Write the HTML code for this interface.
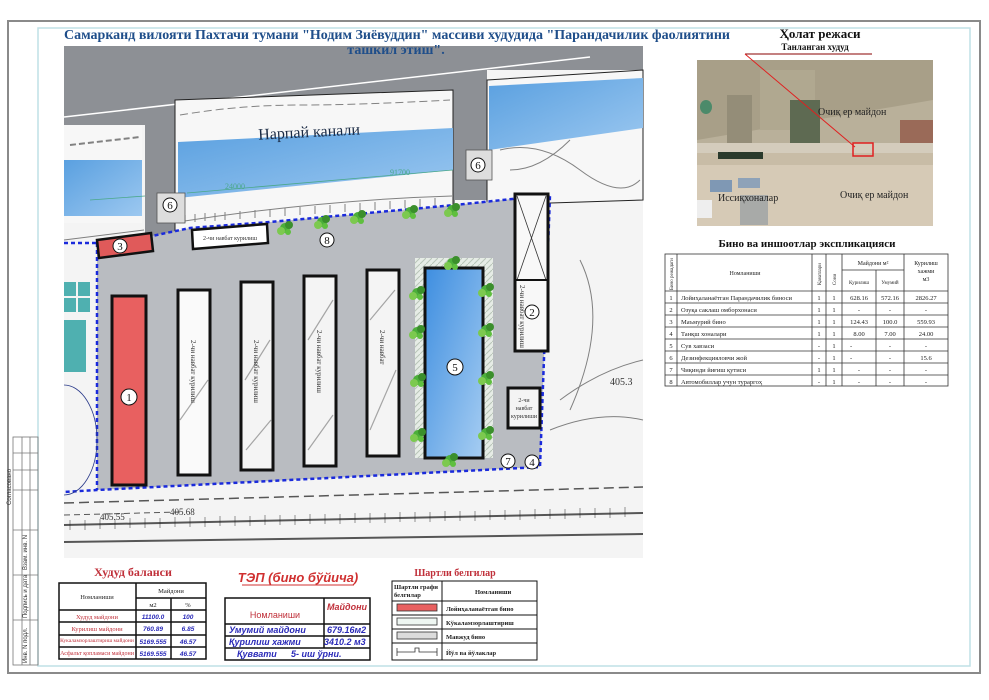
<!DOCTYPE html>
<html><head><meta charset="utf-8"><style>
html,body{margin:0;padding:0;background:#fff;width:989px;height:700px;overflow:hidden}
svg{display:block}
text{font-family:"Liberation Serif",serif}
.s{font-family:"Liberation Sans",sans-serif}
</style></head><body>
<svg width="989" height="700" viewBox="0 0 989 700" xmlns="http://www.w3.org/2000/svg">
<defs>
<linearGradient id="bl" x1="0" y1="0" x2="1" y2="1"><stop offset="0" stop-color="#5aa0e0"/><stop offset="1" stop-color="#9cc8f0"/></linearGradient>
<linearGradient id="pool" x1="0" y1="0" x2="1" y2="1"><stop offset="0" stop-color="#3e8ee0"/><stop offset="1" stop-color="#a6cdf2"/></linearGradient>
<pattern id="hat" width="6" height="6" patternUnits="userSpaceOnUse"><rect width="6" height="6" fill="#e6ece6"/><path d="M0 6L6 0" stroke="#b8c4b8" stroke-width="1"/></pattern>
<g id="tree"><circle cx="0" cy="0" r="5" fill="#4caf3a"/><circle cx="-4" cy="3" r="4" fill="#7cc94f"/><circle cx="4" cy="-3" r="4" fill="#3b8f2c"/><circle cx="3" cy="4" r="3" fill="#5fbf3f"/></g>
</defs>
<rect x="8" y="21" width="972" height="652" fill="#fff" stroke="#8a8a8a" stroke-width="2"/>
<rect x="38" y="28" width="932" height="638" fill="#fff" stroke="#bfe0e6" stroke-width="1.5"/>
<g stroke="#777" stroke-width="0.8" fill="none">
<rect x="13" y="437" width="25" height="228"/>
<line x1="22" y1="437" x2="22" y2="665"/><line x1="30" y1="437" x2="30" y2="665"/>
<line x1="13" y1="453" x2="38" y2="453"/><line x1="13" y1="470" x2="38" y2="470"/><line x1="13" y1="490" x2="38" y2="490"/>
<line x1="13" y1="530" x2="38" y2="530"/><line x1="13" y1="575" x2="38" y2="575"/><line x1="13" y1="620" x2="38" y2="620"/>
</g>
<text x="0" y="0" font-size="6" fill="#333" class="s" transform="translate(11 505) rotate(-90)">Согласовано</text>
<text x="0" y="0" font-size="6" fill="#333" class="s" transform="translate(27 570) rotate(-90)">Взам. инв. N</text>
<text x="0" y="0" font-size="6" fill="#333" class="s" transform="translate(27 618) rotate(-90)">Подпись и дата</text>
<text x="0" y="0" font-size="6" fill="#333" class="s" transform="translate(27 663) rotate(-90)">Инв. N подл.</text>

<g>
<rect x="64" y="46" width="579" height="512" fill="#f4f4f4"/>
<polygon points="64,46 643,46 643,70 485,70 485,90 455,90 455,235 175,235 175,90 145,90 145,125 64,125" fill="#8d9095"/>
<rect x="145" y="90" width="30" height="150" fill="#8d9095"/>
<rect x="455" y="70" width="32" height="130" fill="#8d9095"/>
<line x1="64" y1="117" x2="590" y2="57" stroke="#fff" stroke-width="1.5"/>
<rect x="64" y="125" width="78" height="98" fill="#f7f7f7"/>
<rect x="64" y="160" width="78" height="56" fill="url(#bl)"/>
<polygon points="175,100 453,90 453,230 175,238" fill="#f7f7f7" stroke="#222" stroke-width="1"/>
<polygon points="178,142 453,128 453,170 178,198" fill="url(#bl)"/>
<text x="258" y="137" font-size="16" fill="#1a2a44" transform="rotate(-3 310 130)">Нарпай канали</text>
<polygon points="487,80 643,70 643,200 487,205" fill="#f7f7f7" stroke="#222" stroke-width="1"/>
<polygon points="489,86 643,78 643,128 489,150" fill="url(#bl)"/>
<g stroke="#333" stroke-width="1" opacity="0.6" fill="none">
<path d="M185 215 l0 8 M195 214 l0 8 M205 213 l0 8 M215 213 l0 8 M225 212 l0 8 M240 211 l0 8 M255 210 l0 8 M270 209 l0 8 M285 208 l0 8 M300 207 l0 8 M315 206 l0 8 M330 205 l0 8 M345 204 l0 8 M360 203 l0 8 M375 202 l0 8 M390 201 l0 8 M405 200 l0 8 M420 199 l0 8 M435 198 l0 8"/>
<path d="M178 222 Q320 200 452 196"/><path d="M64 240 l80 -10"/>
<path d="M500 150 q40 -10 80 20 t60 10"/><path d="M510 170 q30 0 60 -30"/>
<path d="M180 115 q60 -10 120 -10 t150 -5" stroke-dasharray="8 4"/>
<path d="M70 145 l70 -8" stroke-dasharray="6 3" stroke-width="2"/>
<path d="M580 260 q30 60 -10 150"/><path d="M560 400 q40 -30 83 -40"/><path d="M550 430 q50 -20 93 -10"/>
</g>
<polygon points="97,243 152,236 190,228 270,222 455,205 550,195 540,467 97,492" fill="#b9bcc1"/>
<polygon points="64,490 97,490 540,467 540,470 643,470 643,558 64,558" fill="#f4f4f4"/>
<polyline points="64,243 97,243 152,236 190,228 270,222 455,205 550,195 540,467 97,490 64,492" fill="none" stroke="#1a2adb" stroke-width="2.5" stroke-dasharray="4 3"/>
<line x1="97" y1="243" x2="97" y2="490" stroke="#1a2adb" stroke-width="2.5" stroke-dasharray="4 3"/>
<rect x="64" y="282" width="12" height="14" fill="#4fb0b0"/><rect x="78" y="282" width="12" height="14" fill="#4fb0b0"/>
<rect x="64" y="298" width="12" height="14" fill="#4fb0b0"/><rect x="78" y="298" width="12" height="14" fill="#4fb0b0"/>
<rect x="64" y="320" width="22" height="52" fill="#4fb0b0"/>
<path d="M64 385 a30 50 0 0 1 0 110" fill="none" stroke="#2a3a8a" stroke-width="0.8"/>
<g stroke="#222" fill="none" opacity="0.75">
<path d="M64 503 L643 487" stroke-dasharray="10 5" stroke-width="1.5"/>
<path d="M64 525 L643 513" stroke-width="2"/><path d="M64 542 L643 534" stroke-width="2"/>
<path d="M64 515 L180 512" stroke-dasharray="6 4"/>
</g>
<g stroke="#222" stroke-width="0.8" opacity="0.6">
<path d="M70 520v10M85 520v10M100 519v10M115 519v10M130 518v10M145 518v10M160 518v10M175 517v10M190 517v10M205 517v10M220 516v10M235 516v10M250 516v10M265 515v10M280 515v10M295 515v10M310 514v10M325 514v10M340 514v10M355 513v10M370 513v10M385 513v10M400 512v10M415 512v10M430 512v10M445 511v10M460 511v10M475 511v10M490 510v10M505 510v10M520 510v10M535 509v10M550 509v10M565 509v10M580 508v10M595 508v10M610 508v10M625 507v10"/>
</g>
<text x="100" y="520" font-size="9" fill="#333">405.55</text><text x="170" y="515" font-size="9" fill="#333">405.68</text>
<text x="610" y="385" font-size="10" fill="#333">405.3</text>
<rect x="112" y="296" width="34" height="189" fill="#e86060" stroke="#111" stroke-width="3"/>
<rect x="178" y="290" width="32" height="185" fill="#fafafa" stroke="#111" stroke-width="3"/>
<rect x="241" y="282" width="32" height="188" fill="#f4f4f4" stroke="#111" stroke-width="3"/>
<rect x="304" y="276" width="32" height="190" fill="#f4f4f4" stroke="#111" stroke-width="3"/>
<rect x="367" y="270" width="32" height="186" fill="#f4f4f4" stroke="#111" stroke-width="3"/>
<g stroke="#555" stroke-width="1.2" opacity="0.5" fill="none">
<path d="M180 420 l28 -40M245 380 l25 -40M246 450 l25 -30M308 340 l25 -40M308 450 l25 -35M370 320 l25 -30M370 430 l26 -60"/>
</g>
<text font-size="7" fill="#333" transform="translate(191 340) rotate(90)">2-чи навбат курилиш</text>
<text font-size="7" fill="#333" transform="translate(254 340) rotate(90)">2-чи навбат курилиш</text>
<text font-size="7" fill="#333" transform="translate(317 330) rotate(90)">2-чи навбат курилиш</text>
<text font-size="7" fill="#333" transform="translate(380 330) rotate(90)">2-чи навбат</text>
<rect x="415" y="258" width="78" height="200" fill="url(#hat)"/>
<rect x="425" y="268" width="58" height="190" fill="url(#pool)" stroke="#111" stroke-width="3"/>
<rect x="515" y="194" width="33" height="157" fill="#f8f8f8" stroke="#111" stroke-width="3"/>
<path d="M517 196 L546 280 M546 196 L517 280" stroke="#333" stroke-width="0.8"/>
<line x1="515" y1="280" x2="548" y2="280" stroke="#111" stroke-width="2"/>
<text font-size="7" fill="#333" transform="translate(520 285) rotate(90)">2-чи навбат курилиш</text>
<rect x="508" y="388" width="32" height="40" fill="#f4f4f4" stroke="#111" stroke-width="3"/>
<text x="524" y="402" font-size="6" fill="#333" text-anchor="middle">2-чи</text><text x="524" y="410" font-size="6" fill="#333" text-anchor="middle">навбат</text><text x="524" y="418" font-size="6" fill="#333" text-anchor="middle">курилиши</text>
<polygon points="97,240 151,233 153,251 99,258" fill="#e05a5a" stroke="#111" stroke-width="2.5"/>
<polygon points="192,230 267,224 268,243 193,249" fill="#fff" stroke="#111" stroke-width="2.5"/>
<text x="230" y="240" font-size="6" fill="#333" text-anchor="middle">2-чи навбат курилиш</text>
<rect x="157" y="193" width="28" height="30" fill="#ddd" stroke="#555" stroke-width="0.8"/>
<rect x="466" y="150" width="26" height="30" fill="#ddd" stroke="#555" stroke-width="0.8"/>
<use href="#tree" x="285" y="228"/><use href="#tree" x="322" y="222"/><use href="#tree" x="358" y="217"/><use href="#tree" x="410" y="212"/><use href="#tree" x="452" y="210"/>
<use href="#tree" x="452" y="263"/>
<use href="#tree" x="417" y="293"/><use href="#tree" x="486" y="290"/><use href="#tree" x="417" y="332"/><use href="#tree" x="486" y="330"/>
<use href="#tree" x="418" y="380"/><use href="#tree" x="486" y="378"/><use href="#tree" x="418" y="435"/><use href="#tree" x="486" y="433"/><use href="#tree" x="450" y="460"/>
<g fill="#fff" stroke="#111" stroke-width="1">
<circle cx="129" cy="397" r="8"/><circle cx="532" cy="312" r="7"/><circle cx="120" cy="246" r="7"/><circle cx="532" cy="462" r="7"/>
<circle cx="455" cy="367" r="8"/><circle cx="170" cy="205" r="7"/><circle cx="478" cy="165" r="7"/><circle cx="508" cy="461" r="7"/><circle cx="327" cy="240" r="7"/>
</g>
<g font-size="11" fill="#111" text-anchor="middle">
<text x="129" y="401">1</text><text x="532" y="316">2</text><text x="120" y="250">3</text><text x="532" y="466">4</text><text x="455" y="371">5</text>
<text x="170" y="209">6</text><text x="478" y="169">6</text><text x="508" y="465">7</text><text x="327" y="244">8</text>
</g>
<g stroke="#4aa88a" stroke-width="0.8" fill="none"><path d="M187 193 L453 170 M90 200 L145 196"/></g>
<text x="225" y="189" font-size="8" fill="#4aa88a">24000</text><text x="390" y="175" font-size="8" fill="#4aa88a">91700</text>
</g>
<text x="64" y="39" font-size="14" font-weight="bold" fill="#1f4e8a" textLength="666">Самарканд вилояти Пахтачи тумани "Нодим Зиёвуддин" массиви худудида "Парандачилик фаолиятини</text>
<text x="396" y="54" font-size="14" font-weight="bold" fill="#1f4e8a" text-anchor="middle">ташкил этиш".</text>
<text x="820" y="38" font-size="13" font-weight="bold" fill="#111" text-anchor="middle">Ҳолат режаси</text>
<text x="815" y="50" font-size="9" font-weight="bold" fill="#111" text-anchor="middle">Танланган худуд</text>
<line x1="745" y1="54" x2="872" y2="54" stroke="#800" stroke-width="1"/>
<rect x="697" y="60" width="236" height="166" fill="#c8bca6"/>
<rect x="697" y="60" width="236" height="82" fill="#a89f88"/>
<polygon points="697,140 933,100 933,145 697,150" fill="#b9b09a"/>
<rect x="760" y="70" width="55" height="60" fill="#b0a890"/>
<rect x="727" y="95" width="25" height="50" fill="#948d78"/><rect x="790" y="100" width="30" height="45" fill="#5e6a52"/>
<rect x="900" y="120" width="33" height="25" fill="#9a6a58"/>
<rect x="697" y="143" width="236" height="10" fill="#d4ccbc"/>
<rect x="718" y="152" width="45" height="7" fill="#2a3a2c"/>
<rect x="697" y="165" width="236" height="61" fill="#d6cab6"/>
<rect x="710" y="180" width="22" height="12" fill="#7f98b4"/><rect x="738" y="178" width="22" height="10" fill="#8ea2b8"/>
<rect x="740" y="195" width="28" height="30" fill="#a8aaa8"/>
<ellipse cx="706" cy="107" rx="6" ry="7" fill="#4c8a6a"/>
<rect x="697" y="200" width="15" height="18" fill="#eee"/>
<text x="818" y="115" font-size="10" fill="#222">Очиқ ер майдон</text>
<text x="840" y="198" font-size="10" fill="#222">Очиқ ер майдон</text>
<text x="718" y="201" font-size="10" fill="#222">Иссиқхоналар</text>
<rect x="853" y="143" width="20" height="13" fill="none" stroke="#e02020" stroke-width="1.5"/>
<line x1="745" y1="54" x2="855" y2="147" stroke="#e02020" stroke-width="1"/>
<text x="807" y="247" font-size="11" font-weight="bold" fill="#111" text-anchor="middle">Бино ва иншоотлар экспликацияси</text>
<g stroke="#333" stroke-width="0.8" fill="none">
<rect x="665" y="254" width="283" height="132"/>
<line x1="665" y1="291" x2="948" y2="291"/>
<line x1="677" y1="254" x2="677" y2="386"/><line x1="812" y1="254" x2="812" y2="386"/><line x1="826" y1="254" x2="826" y2="386"/>
<line x1="842" y1="254" x2="842" y2="386"/><line x1="876" y1="270" x2="876" y2="386"/><line x1="904" y1="254" x2="904" y2="386"/>
<line x1="842" y1="270" x2="904" y2="270"/>
<line x1="665" y1="303" x2="948" y2="303"/><line x1="665" y1="315" x2="948" y2="315"/><line x1="665" y1="327" x2="948" y2="327"/>
<line x1="665" y1="339" x2="948" y2="339"/><line x1="665" y1="351" x2="948" y2="351"/><line x1="665" y1="363" x2="948" y2="363"/><line x1="665" y1="375" x2="948" y2="375"/>
</g>
<g font-size="6" fill="#222">
<text x="745" y="275" text-anchor="middle">Номланиши</text>
<text x="873" y="265" text-anchor="middle">Майдони м²</text>
<text x="859" y="284" text-anchor="middle" font-size="5">Қурилиш</text><text x="890" y="284" text-anchor="middle" font-size="5">Умумий</text>
<text x="926" y="265" text-anchor="middle">Курилиш</text><text x="926" y="273" text-anchor="middle">хажми</text><text x="926" y="281" text-anchor="middle">м3</text>
<text font-size="5" transform="translate(673 290) rotate(-90)">Бино режадаги</text>
<text font-size="5" transform="translate(821 285) rotate(-90)">Қаватлари</text><text font-size="5" transform="translate(836 285) rotate(-90)">Сони</text>
</g>
<g font-size="6.5" fill="#222">
<text x="671" y="300" text-anchor="middle">1</text><text x="681" y="300">Лойиҳаланаётган Парандачилик биноси</text><text x="819" y="300" text-anchor="middle">1</text><text x="834" y="300" text-anchor="middle">1</text><text x="859" y="300" text-anchor="middle">628.16</text><text x="890" y="300" text-anchor="middle">572.16</text><text x="926" y="300" text-anchor="middle">2826.27</text>
<text x="671" y="312" text-anchor="middle">2</text><text x="681" y="312">Озуқа саклаш омборхонаси</text><text x="819" y="312" text-anchor="middle">1</text><text x="834" y="312" text-anchor="middle">1</text><text x="859" y="312" text-anchor="middle">-</text><text x="890" y="312" text-anchor="middle">-</text><text x="926" y="312" text-anchor="middle">-</text>
<text x="671" y="324" text-anchor="middle">3</text><text x="681" y="324">Маъмурий бино</text><text x="819" y="324" text-anchor="middle">1</text><text x="834" y="324" text-anchor="middle">1</text><text x="859" y="324" text-anchor="middle">124.43</text><text x="890" y="324" text-anchor="middle">100.0</text><text x="926" y="324" text-anchor="middle">559.93</text>
<text x="671" y="336" text-anchor="middle">4</text><text x="681" y="336">Танқш хоналари</text><text x="819" y="336" text-anchor="middle">1</text><text x="834" y="336" text-anchor="middle">1</text><text x="859" y="336" text-anchor="middle">8.00</text><text x="890" y="336" text-anchor="middle">7.00</text><text x="926" y="336" text-anchor="middle">24.00</text>
<text x="671" y="348" text-anchor="middle">5</text><text x="681" y="348">Сув хавзаси</text><text x="819" y="348" text-anchor="middle">-</text><text x="834" y="348" text-anchor="middle">1</text><text x="850" y="348">-</text><text x="890" y="348" text-anchor="middle">-</text><text x="926" y="348" text-anchor="middle">-</text>
<text x="671" y="360" text-anchor="middle">6</text><text x="681" y="360">Дезинфекцияловчи жой</text><text x="819" y="360" text-anchor="middle">-</text><text x="834" y="360" text-anchor="middle">1</text><text x="850" y="360">-</text><text x="890" y="360" text-anchor="middle">-</text><text x="926" y="360" text-anchor="middle">15.6</text>
<text x="671" y="372" text-anchor="middle">7</text><text x="681" y="372">Чиқинди йиғиш қутиси</text><text x="819" y="372" text-anchor="middle">1</text><text x="834" y="372" text-anchor="middle">1</text><text x="859" y="372" text-anchor="middle">-</text><text x="890" y="372" text-anchor="middle">-</text><text x="926" y="372" text-anchor="middle">-</text>
<text x="671" y="384" text-anchor="middle">8</text><text x="681" y="384">Автомобиллар учун тураргоҳ</text><text x="819" y="384" text-anchor="middle">-</text><text x="834" y="384" text-anchor="middle">1</text><text x="859" y="384" text-anchor="middle">-</text><text x="890" y="384" text-anchor="middle">-</text><text x="926" y="384" text-anchor="middle">-</text>
</g>
<text x="133" y="576" font-size="12" font-weight="bold" fill="#c0303a" text-anchor="middle">Худуд баланси</text>
<g stroke="#111" stroke-width="1.5" fill="none">
<rect x="59" y="583" width="147" height="76"/>
<line x1="136" y1="583" x2="136" y2="659"/><line x1="171" y1="598" x2="171" y2="659"/>
<line x1="136" y1="598" x2="206" y2="598"/><line x1="59" y1="610" x2="206" y2="610"/>
<line x1="59" y1="622" x2="206" y2="622"/><line x1="59" y1="635" x2="206" y2="635"/><line x1="59" y1="647" x2="206" y2="647"/>
</g>
<g font-size="6.5" fill="#222" text-anchor="middle">
<text x="97" y="599">Номланиши</text><text x="171" y="593">Майдони</text><text x="153" y="607">м2</text><text x="188" y="607">%</text>
</g>
<g font-size="6.5" fill="#c0303a" text-anchor="middle">
<text x="97" y="619">Худуд майдони</text><text x="97" y="631">Курилиш майдони</text><text x="97" y="642" font-size="5.5">Кукаламзорлаштириш майдони</text><text x="97" y="655" font-size="6">Асфальт қопламаси майдони</text>
</g>
<g font-size="6.5" fill="#2a2ab8" font-weight="bold" font-style="italic" text-anchor="middle">
<text x="153" y="619" class="s">11100.0</text><text x="188" y="619" class="s">100</text>
<text x="153" y="631" class="s">760.89</text><text x="188" y="631" class="s">6.85</text>
<text x="153" y="644" class="s">5169.555</text><text x="188" y="644" class="s">46.57</text>
<text x="153" y="656" class="s">5169.555</text><text x="188" y="656" class="s">46.57</text>
</g>
<text x="298" y="582" font-size="13" font-weight="bold" font-style="italic" fill="#d03030" text-anchor="middle" class="s">ТЭП (бино бўйича)</text>
<line x1="242" y1="585" x2="354" y2="585" stroke="#d03030" stroke-width="1"/>
<g stroke="#111" stroke-width="1.5" fill="none">
<rect x="225" y="598" width="145" height="62"/>
<line x1="324" y1="598" x2="324" y2="648"/>
<line x1="225" y1="624" x2="370" y2="624"/><line x1="225" y1="636" x2="370" y2="636"/><line x1="225" y1="648" x2="370" y2="648"/>
</g>
<text x="275" y="618" font-size="9" fill="#c0303a" text-anchor="middle" class="s">Номланиши</text>
<text x="347" y="610" font-size="9" fill="#c0303a" text-anchor="middle" class="s" font-weight="bold" font-style="italic">Майдони</text>
<g font-size="9" fill="#2a2ab8" font-weight="bold" font-style="italic">
<text x="229" y="633" class="s">Умумий майдони</text><text x="327" y="633" class="s">679.16м2</text>
<text x="229" y="645" class="s">Қурилиш хажми</text><text x="324" y="645" class="s">3410.2 м3</text>
<text x="237" y="657" class="s">Қуввати</text><text x="291" y="657" class="s">5- иш ўрни.</text>
</g>
<text x="455" y="576" font-size="10" font-weight="bold" fill="#c0303a" text-anchor="middle">Шартли белгилар</text>
<g stroke="#111" stroke-width="1" fill="none">
<rect x="392" y="581" width="145" height="79"/>
<line x1="442" y1="581" x2="442" y2="660"/>
<line x1="392" y1="601" x2="537" y2="601"/><line x1="392" y1="615" x2="537" y2="615"/><line x1="392" y1="629" x2="537" y2="629"/><line x1="392" y1="643" x2="537" y2="643"/>
</g>
<text x="394" y="589" font-size="6.5" font-weight="bold" fill="#222">Шартли графи</text><text x="394" y="597" font-size="6.5" font-weight="bold" fill="#222">белгилар</text>
<text x="475" y="594" font-size="6.5" font-weight="bold" fill="#222">Номланиши</text>
<rect x="397" y="604" width="40" height="7" fill="#e86060" stroke="#333" stroke-width="0.8"/>
<rect x="397" y="618" width="40" height="7" fill="#eef6f2" stroke="#333" stroke-width="0.8"/>
<rect x="397" y="632" width="40" height="7" fill="#dcdcdc" stroke="#333" stroke-width="0.8"/>
<path d="M397 652 h18 v-4 h4 v4 h18 M397 648 v8 M437 648 v8" stroke="#333" stroke-width="0.8" fill="none"/>
<g font-size="6.5" font-weight="bold" fill="#222">
<text x="446" y="611">Лойиҳаланаётган бино</text><text x="446" y="625">Кўкаламзорлаштириш</text><text x="446" y="639">Мавжуд бино</text><text x="446" y="655">Йўл ва йўлаклар</text>
</g>
</svg>
</body></html>
